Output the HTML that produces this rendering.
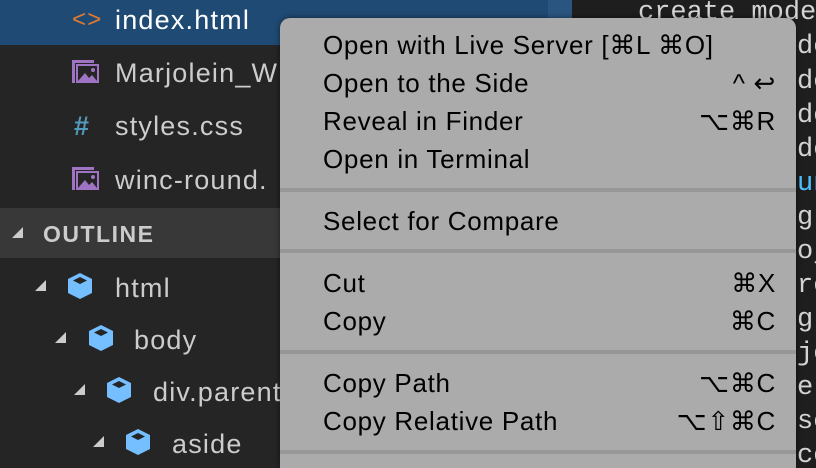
<!DOCTYPE html>
<html style="overflow:hidden;width:816px;height:468px"><head><meta charset="utf-8"><style>
body{margin:0;width:816px;height:468px;overflow:hidden;background:#1e1e1e;position:relative;font-family:"Liberation Sans",sans-serif}
.side{position:absolute;left:0;top:0;width:572px;height:468px;background:#252526}
.sel{position:absolute;left:0;top:0;width:548px;height:45px;background:#1f4a73}
.sel2{position:absolute;left:548px;top:0;width:24px;height:45px;background:#2a5580}
.row{position:absolute;color:#cccccc;font-size:27px;letter-spacing:1.2px;white-space:nowrap;line-height:30px}
.hdr{position:absolute;left:0;top:208px;width:572px;height:50px;background:#383838}
.cl{position:absolute;left:797px;font-family:"Liberation Mono",monospace;font-size:27px;line-height:30px;color:#d4d4d4;white-space:pre}
.menu{position:absolute;left:280px;top:18px;width:516px;height:450px;background:#ababab;border-radius:10px 10px 0 0;box-shadow:0 0 6px rgba(0,0,0,.5)}
.it{position:absolute;left:43px;right:20px;font-size:26px;letter-spacing:0.7px;color:#000;line-height:30px;white-space:nowrap}
.it span{position:absolute;right:0;top:0}
.sep{position:absolute;left:0;right:0;height:4px;background:#979797}
.tri{position:absolute;width:0;height:0;border-left:11px solid transparent;border-bottom:11px solid #ccc}
.cube{position:absolute;width:26px;height:28px}
</style></head><body>
<div class="side"></div>
<div class="sel"></div><div class="sel2"></div>
<div class="row" style="left:72px;top:5px;color:#e37933;font-size:24px">&lt;&gt;</div>
<div class="row" style="left:115px;top:5px;color:#fff">index.html</div>
<svg style="position:absolute;left:70px;top:58px" width="30" height="26"><path d="M2 2h22v3H5v20H2z" fill="#a074c4"/><rect x="7" y="7" width="21" height="17" fill="none" stroke="#a074c4" stroke-width="2"/><path d="M8 23l7-8 4 5 3-3 5 6z" fill="#a074c4"/><circle cx="23" cy="12" r="2" fill="#a074c4"/></svg>
<div class="row" style="left:115px;top:58px">Marjolein_W</div>
<div class="row" style="left:74px;top:111px;color:#519aba;font-weight:bold">#</div>
<div class="row" style="left:115px;top:111px">styles.css</div>
<svg style="position:absolute;left:70px;top:165px" width="30" height="26"><path d="M2 2h22v3H5v20H2z" fill="#a074c4"/><rect x="7" y="7" width="21" height="17" fill="none" stroke="#a074c4" stroke-width="2"/><path d="M8 23l7-8 4 5 3-3 5 6z" fill="#a074c4"/><circle cx="23" cy="12" r="2" fill="#a074c4"/></svg>
<div class="row" style="left:115px;top:165px">winc-round.</div>
<div class="hdr"></div>
<div class="tri" style="left:12px;top:227px"></div>
<div class="row" style="left:43px;top:219px;font-size:23px;font-weight:bold;letter-spacing:1.5px">OUTLINE</div>
<div class="tri" style="left:35px;top:280px"></div>
<svg class="cube" style="left:67px;top:272px" viewBox="0 0 26 28"><path d="M13 1L25 7v14L13 27 1 21V7z" fill="#75beff"/><path d="M13 5l7 3.5-7 3.5-7-3.5z" fill="#252526"/></svg>
<div class="row" style="left:115px;top:273px">html</div>
<div class="tri" style="left:55px;top:332px"></div>
<svg class="cube" style="left:88px;top:324px" viewBox="0 0 26 28"><path d="M13 1L25 7v14L13 27 1 21V7z" fill="#75beff"/><path d="M13 5l7 3.5-7 3.5-7-3.5z" fill="#252526"/></svg>
<div class="row" style="left:134px;top:325px">body</div>
<div class="tri" style="left:74px;top:384px"></div>
<svg class="cube" style="left:106px;top:376px" viewBox="0 0 26 28"><path d="M13 1L25 7v14L13 27 1 21V7z" fill="#75beff"/><path d="M13 5l7 3.5-7 3.5-7-3.5z" fill="#252526"/></svg>
<div class="row" style="left:153px;top:377px">div.parent</div>
<div class="tri" style="left:93px;top:436px"></div>
<svg class="cube" style="left:125px;top:428px" viewBox="0 0 26 28"><path d="M13 1L25 7v14L13 27 1 21V7z" fill="#75beff"/><path d="M13 5l7 3.5-7 3.5-7-3.5z" fill="#252526"/></svg>
<div class="row" style="left:172px;top:429px">aside</div>
<div class="cl" style="left:638px;top:-2px">create mode</div>
<div class="cl" style="top:32px">de</div>
<div class="cl" style="top:67px">de</div>
<div class="cl" style="top:101px">de</div>
<div class="cl" style="top:135px">de</div>
<div class="cl" style="top:169px;color:#4fc1ff">un</div>
<div class="cl" style="top:203px">g</div>
<div class="cl" style="top:237px">oj</div>
<div class="cl" style="top:271px">re</div>
<div class="cl" style="top:305px">g</div>
<div class="cl" style="top:339px">je</div>
<div class="cl" style="top:373px">el</div>
<div class="cl" style="top:407px">sc</div>
<div class="cl" style="top:441px">co</div>
<div class="menu">
<div class="it" style="top:12px">Open with Live Server [⌘L ⌘O]</div>
<div class="it" style="top:50px">Open to the Side<span>^ ↩</span></div>
<div class="it" style="top:88px">Reveal in Finder<span>⌥⌘R</span></div>
<div class="it" style="top:126px">Open in Terminal</div>
<div class="sep" style="top:170px"></div>
<div class="it" style="top:188px">Select for Compare</div>
<div class="sep" style="top:231px"></div>
<div class="it" style="top:250px">Cut<span>⌘X</span></div>
<div class="it" style="top:288px">Copy<span>⌘C</span></div>
<div class="sep" style="top:332px"></div>
<div class="it" style="top:350px">Copy Path<span>⌥⌘C</span></div>
<div class="it" style="top:388px">Copy Relative Path<span>⌥⇧⌘C</span></div>
<div class="sep" style="top:432px"></div>
</div>
</body></html>
